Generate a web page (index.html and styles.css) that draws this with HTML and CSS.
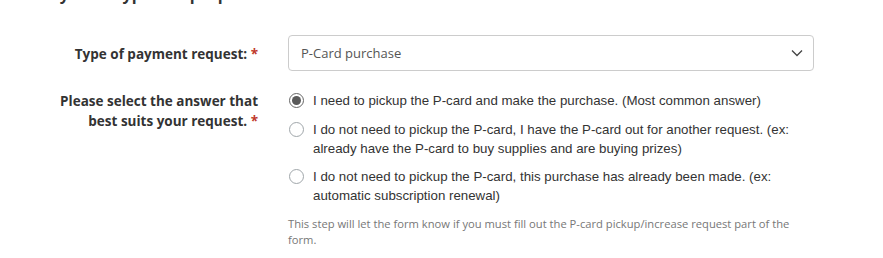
FILE: index.html
```html
<!DOCTYPE html>
<html>
<head>
<meta charset="utf-8">
<link rel="stylesheet" href="styles.css">
</head>
<body>
<div class="form">
  <h3 class="section-title">Payment type and purpose</h3>
  <div class="row row-select">
    <label class="label" for="ptype">Type of payment request: <span class="req">*</span></label>
    <div class="field">
      <div class="select">
        <span class="select-value">P-Card purchase</span>
        <svg class="chevron" width="12" height="8" viewBox="0 0 12 8"><path d="M1 1.5 L6 6.5 L11 1.5" fill="none" stroke="#444" stroke-width="1.3"/></svg>
      </div>
    </div>
  </div>
  <div class="row row-radios">
    <div class="label">Please select the answer that best suits your request. <span class="req">*</span></div>
    <div class="field">
      <label class="option"><span class="radio checked"></span><span class="option-text">I need to pickup the P-card and make the purchase. (Most common answer)</span></label>
      <label class="option"><span class="radio"></span><span class="option-text">I do not need to pickup the P-card, I have the P-card out for another request. (ex: already have the P-card to buy supplies and are buying prizes)</span></label>
      <label class="option"><span class="radio"></span><span class="option-text">I do not need to pickup the P-card, this purchase has already been made. (ex: automatic subscription renewal)</span></label>
      <p class="help">This step will let the form know if you must fill out the P-card pickup/increase request part of the form.</p>
    </div>
  </div>
</div>
</body>
</html>
```
FILE: styles.css
```css
html, body {
  margin: 0;
  padding: 0;
  background: #fff;
}
.form {
  width: 883px;
  overflow: hidden;
  height: 258px;
}
.section-title {
  margin: -16px 0 0 40px;
  height: 20px;
  font-family: "Open Sans", sans-serif;
  font-size: 16px;
  line-height: 20px;
  font-weight: 700;
  color: #333;
}
.row {
  display: grid;
  grid-template-columns: 258px 526px;
  column-gap: 30px;
}
.row-select {
  margin-top: 31px;
  align-items: center;
}
.row-radios {
  margin-top: 20px;
}
.label {
  text-align: right;
  font-family: "Open Sans", sans-serif;
  font-weight: 700;
  font-size: 13.5px;
  line-height: 20px;
  color: #333;
  padding-left: 50px;
}
.row-select .label {
  padding-top: 2px;
}
.req {
  color: #c0392b;
}
.select {
  height: 36px;
  box-sizing: border-box;
  border: 1px solid #ccc;
  border-radius: 4px;
  display: flex;
  align-items: center;
  justify-content: space-between;
  padding: 0 10px 0 12px;
}
.select-value {
  font-family: "Open Sans", sans-serif;
  font-size: 13px;
  color: #555;
}
.option {
  display: flex;
  align-items: flex-start;
  gap: 9px;
  margin-bottom: 9.5px;
  font-family: "Liberation Sans", Arial, sans-serif;
  font-size: 13.3px;
  line-height: 19px;
  color: #333;
}
.radio {
  flex: none;
  width: 15px;
  height: 15px;
  box-sizing: border-box;
  border: 1px solid #a0a6aa;
  border-radius: 50%;
  margin-top: 2px;
  margin-left: 1px;
  display: flex;
  align-items: center;
  justify-content: center;
}
.radio.checked {
  border-color: #666;
}
.radio.checked::after {
  content: "";
  width: 9px;
  height: 9px;
  border-radius: 50%;
  background: #5a5a5a;
}
.help {
  margin: 11px 0 0 0;
  font-family: "Open Sans", sans-serif;
  font-size: 11.2px;
  line-height: 16px;
  color: #777;
}
```
